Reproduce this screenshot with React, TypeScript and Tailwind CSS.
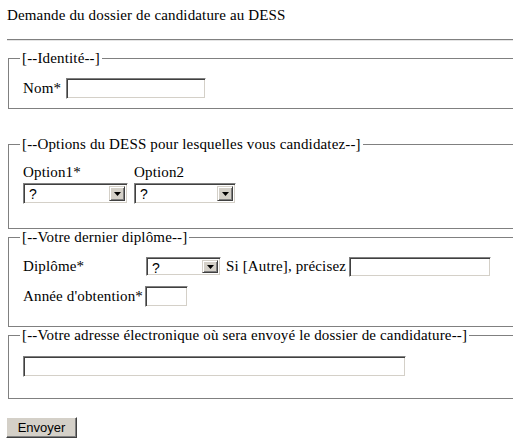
import React from "react";

const sunken =
  "border border-t-[#808080] border-l-[#808080] border-b-white border-r-white shadow-[inset_1px_1px_0_#404040,inset_-1px_-1px_0_#d4d0c8] bg-white";

function TextBox({ className }: { className: string }) {
  return <div className={`${sunken} ${className}`} />;
}

function Select({ className }: { className: string }) {
  return (
    <div className={`${sunken} ${className} flex items-stretch p-[2px]`}>
      <span className="flex-1 pl-[3px] leading-[16px] text-[14px] tracking-normal font-['Liberation_Sans',sans-serif]">?</span>
      <span className="w-[16px] bg-[#d4d0c8] border border-t-[#d4d0c8] border-l-[#d4d0c8] border-b-[#404040] border-r-[#404040] shadow-[inset_1px_1px_0_#ffffff,inset_-1px_-1px_0_#808080] flex items-center justify-center">
        <svg width="7" height="4" viewBox="0 0 7 4">
          <path d="M0 0h7L3.5 4z" fill="#000" />
        </svg>
      </span>
    </div>
  );
}

function Box({ legend, className, children }: { legend: string; className?: string; children: React.ReactNode }) {
  return (
    <fieldset className={`w-[540px] ml-[8px] border border-[#808080] pl-[14px] ${className ?? ""}`}>
      <legend className="-ml-[3px] px-[2px] leading-[17px]">{legend}</legend>
      {children}
    </fieldset>
  );
}

export default function App() {
  return (
    <div className="w-[513px] h-[444px] overflow-hidden bg-white text-black text-[15px] tracking-[0.15px] font-['Liberation_Serif',serif]">
      <div className="pl-[7px] pt-[7px] leading-[17px]">Demande du dossier de candidature au DESS</div>
      <div className="ml-[7px] mt-[15px] h-[2px] border-t border-t-[#808080] border-b border-b-[#e4e4e4]" />

      <Box legend="[--Identité--]" className="mt-[9px] pb-[9px]">
        <div className="mt-[11px] flex items-center gap-[5px] h-[21px]">
          <span>Nom*</span>
          <TextBox className="w-[140px] h-[21px]" />
        </div>
      </Box>

      <Box legend="[--Options du DESS pour lesquelles vous candidatez--]" className="mt-[27px] pb-[24px]">
        <div className="mt-[11px] flex gap-[6px]">
          <div className="flex flex-col gap-[2px]">
            <span className="leading-[17px]">Option1*</span>
            <Select className="w-[105px] h-[21px]" />
          </div>
          <div className="flex flex-col gap-[2px]">
            <span className="leading-[17px]">Option2</span>
            <Select className="w-[102px] h-[21px]" />
          </div>
        </div>
      </Box>

      <Box legend="[--Votre dernier diplôme--]" className="pb-[19px]">
        <div className="mt-[10px] flex items-center h-[21px]">
          <span className="w-[123px]">Diplôme*</span>
          <Select className="w-[75px] h-[19px]" />
          <span className="ml-[5px] mr-[3px]">Si [Autre], précisez</span>
          <TextBox className="w-[142px] h-[20px]" />
        </div>
        <div className="mt-[9px] flex items-center gap-[2px] h-[21px]">
          <span>Année d'obtention*</span>
          <TextBox className="w-[43px] h-[21px]" />
        </div>
      </Box>

      <Box legend="[--Votre adresse électronique où sera envoyé le dossier de candidature--]" className="pb-[21px]">
        <TextBox className="mt-[12px] w-[383px] h-[21px]" />
      </Box>

      <div className="pl-[6px] mt-[17px]">
        <button className="w-[71px] h-[21px] bg-[#d4d0c8] border border-t-[#ffffff] border-l-[#ffffff] border-b-[#404040] border-r-[#404040] shadow-[inset_-1px_-1px_0_#808080] text-[13px] tracking-normal font-['Liberation_Sans',sans-serif] leading-[17px]">
          Envoyer
        </button>
      </div>
    </div>
  );
}
